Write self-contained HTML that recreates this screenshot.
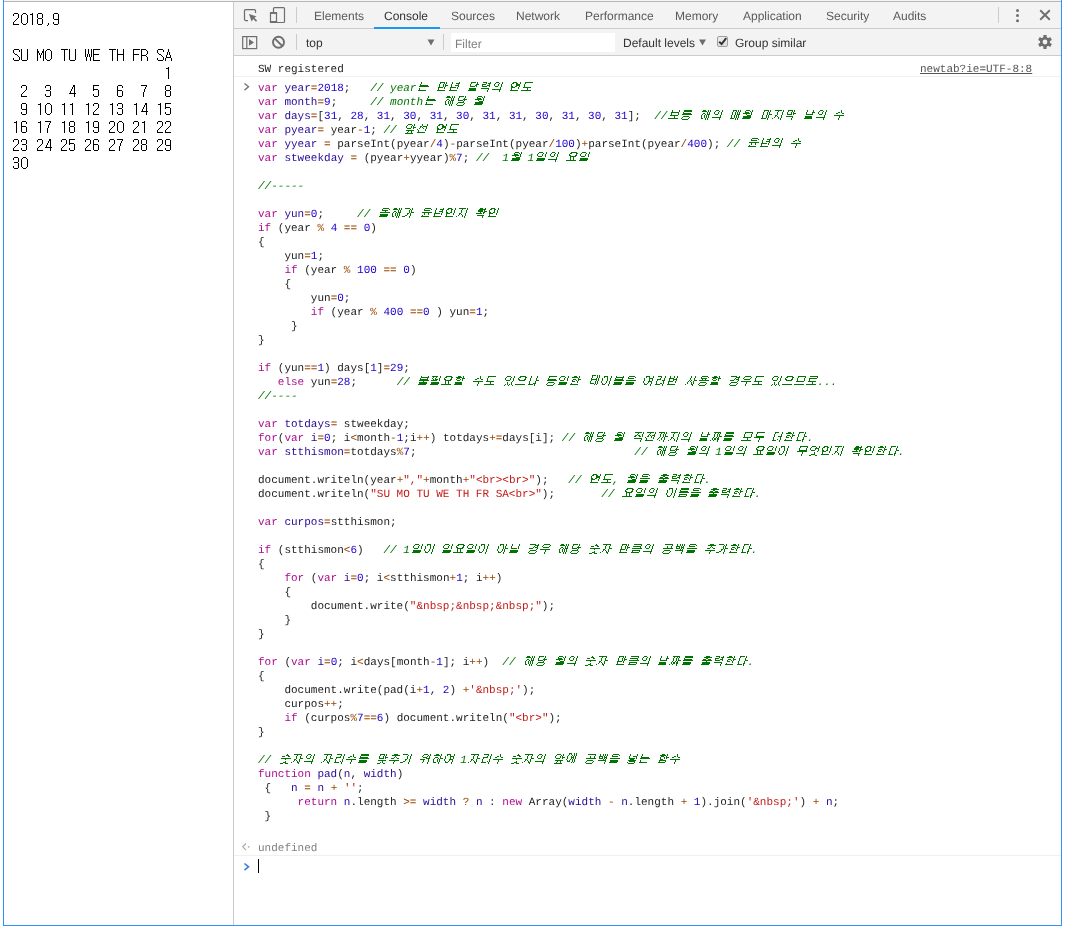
<!DOCTYPE html><html><head><meta charset="utf-8"><style>
*{margin:0;padding:0;box-sizing:border-box}
html,body{width:1066px;height:929px;overflow:hidden;background:#fff;text-rendering:geometricPrecision}
body{position:relative;font-family:"Liberation Sans",sans-serif}
#root{position:absolute;left:0;top:0;width:1066px;height:929px;will-change:transform}
.abs{position:absolute}
.cal{position:absolute;left:12px;top:12px;font-family:"Liberation Mono",monospace;font-size:18px;line-height:18px;color:transparent;white-space:pre;transform-origin:0 0;transform:scaleX(0.7407)}
.dt{position:absolute;left:233px;top:2px;width:828px;height:923px;border-left:1px solid #cbcbcb;background:#fff}
.tb{position:absolute;left:0;width:827px;height:27px;background:#f3f3f3;border-bottom:1px solid #cbcbcb}
.lbl{position:absolute;font-size:12px;color:#5a5a5a;white-space:nowrap}
.sep{position:absolute;width:1px;background:#cbcbcb}
pre.code{position:absolute;left:25px;top:79px;font-family:"Liberation Mono",monospace;font-size:11px;line-height:14px;color:#222;white-space:pre}
.k{color:rgb(170,13,145)}
.d{color:rgb(40,10,150)}
.n{color:rgb(28,0,207)}
.s{color:rgb(196,26,22)}
.o{color:rgb(153,69,0)}
.c{color:rgb(0,116,0);font-style:italic}
i.h{display:inline-block;font-style:normal;overflow:hidden;white-space:nowrap;font-size:12px;line-height:10px;color:transparent;vertical-align:top;height:10px}
</style></head><body><div id="root">
<div class="abs" style="left:4px;top:0;width:1057px;height:1px;background:#f5f5f5"></div>
<div class="abs" style="left:4px;top:1px;width:1057px;height:1px;background:#b8b6b8"></div>
<div class="cal">2018,9

SU MO TU WE TH FR SA
                   1
 2  3  4  5  6  7  8
 9 10 11 12 13 14 15
16 17 18 19 20 21 22
23 24 25 26 27 28 29
30</div>
<svg class="abs" style="left:0;top:0" width="232" height="200" shape-rendering="crispEdges"><defs><path id="c0" d="M2 0h4v1h-4zM1 1h1v1h-1zM6 1h1v1h-1zM1 2h1v1h-1zM6 2h1v1h-1zM6 3h1v1h-1zM6 4h1v1h-1zM5 5h1v1h-1zM4 6h1v1h-1zM3 7h1v1h-1zM2 8h1v1h-1zM1 9h1v1h-1zM1 10h1v1h-1zM1 11h6v1h-6z"/><path id="c1" d="M3 0h3v1h-3zM2 1h1v1h-1zM6 1h1v1h-1zM1 2h1v1h-1zM7 2h1v1h-1zM1 3h1v1h-1zM7 3h1v1h-1zM1 4h1v1h-1zM7 4h1v1h-1zM1 5h1v1h-1zM7 5h1v1h-1zM1 6h1v1h-1zM7 6h1v1h-1zM1 7h1v1h-1zM7 7h1v1h-1zM1 8h1v1h-1zM7 8h1v1h-1zM1 9h1v1h-1zM7 9h1v1h-1zM2 10h1v1h-1zM6 10h1v1h-1zM3 11h3v1h-3z"/><path id="c2" d="M4 0h1v1h-1zM2 1h3v1h-3zM4 2h1v1h-1zM4 3h1v1h-1zM4 4h1v1h-1zM4 5h1v1h-1zM4 6h1v1h-1zM4 7h1v1h-1zM4 8h1v1h-1zM4 9h1v1h-1zM4 10h1v1h-1zM4 11h1v1h-1z"/><path id="c3" d="M2 0h4v1h-4zM1 1h1v1h-1zM6 1h1v1h-1zM1 2h1v1h-1zM6 2h1v1h-1zM1 3h1v1h-1zM6 3h1v1h-1zM1 4h1v1h-1zM6 4h1v1h-1zM2 5h4v1h-4zM1 6h1v1h-1zM6 6h1v1h-1zM1 7h1v1h-1zM6 7h1v1h-1zM1 8h1v1h-1zM6 8h1v1h-1zM1 9h1v1h-1zM6 9h1v1h-1zM1 10h1v1h-1zM6 10h1v1h-1zM2 11h4v1h-4z"/><path id="c4" d="M4 10h1v1h-1zM4 11h1v1h-1zM3 12h1v1h-1z"/><path id="c5" d="M2 0h4v1h-4zM1 1h1v1h-1zM6 1h1v1h-1zM1 2h1v1h-1zM6 2h1v1h-1zM1 3h1v1h-1zM6 3h1v1h-1zM1 4h1v1h-1zM6 4h1v1h-1zM1 5h1v1h-1zM6 5h1v1h-1zM2 6h5v1h-5zM6 7h1v1h-1zM6 8h1v1h-1zM1 9h1v1h-1zM6 9h1v1h-1zM1 10h1v1h-1zM6 10h1v1h-1zM2 11h4v1h-4z"/><path id="c6" d="M2 0h5v1h-5zM1 1h1v1h-1zM7 1h1v1h-1zM1 2h1v1h-1zM7 2h1v1h-1zM1 3h1v1h-1zM2 4h1v1h-1zM3 5h2v1h-2zM5 6h1v1h-1zM6 7h1v1h-1zM7 8h1v1h-1zM1 9h1v1h-1zM7 9h1v1h-1zM1 10h1v1h-1zM7 10h1v1h-1zM2 11h5v1h-5z"/><path id="c7" d="M1 0h1v1h-1zM7 0h1v1h-1zM1 1h1v1h-1zM7 1h1v1h-1zM1 2h1v1h-1zM7 2h1v1h-1zM1 3h1v1h-1zM7 3h1v1h-1zM1 4h1v1h-1zM7 4h1v1h-1zM1 5h1v1h-1zM7 5h1v1h-1zM1 6h1v1h-1zM7 6h1v1h-1zM1 7h1v1h-1zM7 7h1v1h-1zM1 8h1v1h-1zM7 8h1v1h-1zM1 9h1v1h-1zM7 9h1v1h-1zM1 10h1v1h-1zM7 10h1v1h-1zM2 11h5v1h-5z"/><path id="c8" d="M1 0h1v1h-1zM7 0h1v1h-1zM1 1h1v1h-1zM7 1h1v1h-1zM1 2h2v1h-2zM6 2h2v1h-2zM1 3h2v1h-2zM6 3h2v1h-2zM1 4h1v1h-1zM3 4h1v1h-1zM5 4h1v1h-1zM7 4h1v1h-1zM1 5h1v1h-1zM3 5h1v1h-1zM5 5h1v1h-1zM7 5h1v1h-1zM1 6h1v1h-1zM4 6h1v1h-1zM7 6h1v1h-1zM1 7h1v1h-1zM4 7h1v1h-1zM7 7h1v1h-1zM1 8h1v1h-1zM4 8h1v1h-1zM7 8h1v1h-1zM1 9h1v1h-1zM7 9h1v1h-1zM1 10h1v1h-1zM7 10h1v1h-1zM1 11h1v1h-1zM7 11h1v1h-1z"/><path id="c9" d="M3 0h3v1h-3zM2 1h1v1h-1zM6 1h1v1h-1zM1 2h1v1h-1zM7 2h1v1h-1zM1 3h1v1h-1zM7 3h1v1h-1zM1 4h1v1h-1zM7 4h1v1h-1zM1 5h1v1h-1zM7 5h1v1h-1zM1 6h1v1h-1zM7 6h1v1h-1zM1 7h1v1h-1zM7 7h1v1h-1zM1 8h1v1h-1zM7 8h1v1h-1zM1 9h1v1h-1zM7 9h1v1h-1zM2 10h1v1h-1zM6 10h1v1h-1zM3 11h3v1h-3z"/><path id="c10" d="M1 0h7v1h-7zM4 1h1v1h-1zM4 2h1v1h-1zM4 3h1v1h-1zM4 4h1v1h-1zM4 5h1v1h-1zM4 6h1v1h-1zM4 7h1v1h-1zM4 8h1v1h-1zM4 9h1v1h-1zM4 10h1v1h-1zM4 11h1v1h-1z"/><path id="c11" d="M1 0h1v1h-1zM4 0h1v1h-1zM7 0h1v1h-1zM1 1h1v1h-1zM4 1h1v1h-1zM7 1h1v1h-1zM1 2h1v1h-1zM4 2h1v1h-1zM7 2h1v1h-1zM1 3h1v1h-1zM4 3h1v1h-1zM7 3h1v1h-1zM1 4h1v1h-1zM4 4h1v1h-1zM7 4h1v1h-1zM1 5h1v1h-1zM3 5h1v1h-1zM5 5h1v1h-1zM7 5h1v1h-1zM1 6h1v1h-1zM3 6h1v1h-1zM5 6h1v1h-1zM7 6h1v1h-1zM1 7h1v1h-1zM3 7h1v1h-1zM5 7h1v1h-1zM7 7h1v1h-1zM2 8h1v1h-1zM6 8h1v1h-1zM2 9h1v1h-1zM6 9h1v1h-1zM2 10h1v1h-1zM6 10h1v1h-1zM2 11h1v1h-1zM6 11h1v1h-1z"/><path id="c12" d="M1 0h7v1h-7zM1 1h1v1h-1zM1 2h1v1h-1zM1 3h1v1h-1zM1 4h1v1h-1zM1 5h6v1h-6zM1 6h1v1h-1zM1 7h1v1h-1zM1 8h1v1h-1zM1 9h1v1h-1zM1 10h1v1h-1zM1 11h7v1h-7z"/><path id="c13" d="M1 0h1v1h-1zM7 0h1v1h-1zM1 1h1v1h-1zM7 1h1v1h-1zM1 2h1v1h-1zM7 2h1v1h-1zM1 3h1v1h-1zM7 3h1v1h-1zM1 4h1v1h-1zM7 4h1v1h-1zM1 5h7v1h-7zM1 6h1v1h-1zM7 6h1v1h-1zM1 7h1v1h-1zM7 7h1v1h-1zM1 8h1v1h-1zM7 8h1v1h-1zM1 9h1v1h-1zM7 9h1v1h-1zM1 10h1v1h-1zM7 10h1v1h-1zM1 11h1v1h-1zM7 11h1v1h-1z"/><path id="c14" d="M1 0h7v1h-7zM1 1h1v1h-1zM1 2h1v1h-1zM1 3h1v1h-1zM1 4h1v1h-1zM1 5h6v1h-6zM1 6h1v1h-1zM1 7h1v1h-1zM1 8h1v1h-1zM1 9h1v1h-1zM1 10h1v1h-1zM1 11h1v1h-1z"/><path id="c15" d="M1 0h5v1h-5zM1 1h1v1h-1zM6 1h1v1h-1zM1 2h1v1h-1zM7 2h1v1h-1zM1 3h1v1h-1zM7 3h1v1h-1zM1 4h1v1h-1zM7 4h1v1h-1zM1 5h1v1h-1zM6 5h1v1h-1zM1 6h5v1h-5zM1 7h1v1h-1zM6 7h1v1h-1zM1 8h1v1h-1zM7 8h1v1h-1zM1 9h1v1h-1zM7 9h1v1h-1zM1 10h1v1h-1zM7 10h1v1h-1zM1 11h1v1h-1zM7 11h1v1h-1z"/><path id="c16" d="M4 0h1v1h-1zM4 1h1v1h-1zM4 2h1v1h-1zM3 3h1v1h-1zM5 3h1v1h-1zM3 4h1v1h-1zM5 4h1v1h-1zM3 5h1v1h-1zM5 5h1v1h-1zM2 6h1v1h-1zM6 6h1v1h-1zM2 7h1v1h-1zM6 7h1v1h-1zM2 8h5v1h-5zM1 9h1v1h-1zM7 9h1v1h-1zM1 10h1v1h-1zM7 10h1v1h-1zM1 11h1v1h-1zM7 11h1v1h-1z"/><path id="c17" d="M2 0h4v1h-4zM1 1h1v1h-1zM6 1h1v1h-1zM1 2h1v1h-1zM6 2h1v1h-1zM6 3h1v1h-1zM6 4h1v1h-1zM2 5h4v1h-4zM6 6h1v1h-1zM6 7h1v1h-1zM6 8h1v1h-1zM1 9h1v1h-1zM6 9h1v1h-1zM1 10h1v1h-1zM6 10h1v1h-1zM2 11h4v1h-4z"/><path id="c18" d="M5 0h2v1h-2zM5 1h2v1h-2zM4 2h1v1h-1zM6 2h1v1h-1zM4 3h1v1h-1zM6 3h1v1h-1zM3 4h1v1h-1zM6 4h1v1h-1zM3 5h1v1h-1zM6 5h1v1h-1zM2 6h1v1h-1zM6 6h1v1h-1zM2 7h1v1h-1zM6 7h1v1h-1zM1 8h7v1h-7zM6 9h1v1h-1zM6 10h1v1h-1zM6 11h1v1h-1z"/><path id="c19" d="M1 0h6v1h-6zM1 1h1v1h-1zM1 2h1v1h-1zM1 3h1v1h-1zM1 4h5v1h-5zM1 5h1v1h-1zM6 5h1v1h-1zM6 6h1v1h-1zM6 7h1v1h-1zM6 8h1v1h-1zM1 9h1v1h-1zM6 9h1v1h-1zM1 10h1v1h-1zM6 10h1v1h-1zM2 11h4v1h-4z"/><path id="c20" d="M2 0h4v1h-4zM1 1h1v1h-1zM6 1h1v1h-1zM1 2h1v1h-1zM6 2h1v1h-1zM1 3h1v1h-1zM1 4h1v1h-1zM1 5h5v1h-5zM1 6h1v1h-1zM6 6h1v1h-1zM1 7h1v1h-1zM6 7h1v1h-1zM1 8h1v1h-1zM6 8h1v1h-1zM1 9h1v1h-1zM6 9h1v1h-1zM1 10h1v1h-1zM6 10h1v1h-1zM2 11h4v1h-4z"/><path id="c21" d="M1 0h6v1h-6zM6 1h1v1h-1zM5 2h1v1h-1zM5 3h1v1h-1zM4 4h1v1h-1zM4 5h1v1h-1zM4 6h1v1h-1zM3 7h1v1h-1zM3 8h1v1h-1zM3 9h1v1h-1zM3 10h1v1h-1zM3 11h1v1h-1z"/></defs><g fill="#000"><use href="#c0" x="12" y="13"/><use href="#c1" x="20" y="13"/><use href="#c2" x="28" y="13"/><use href="#c3" x="36" y="13"/><use href="#c4" x="44" y="13"/><use href="#c5" x="52" y="13"/><use href="#c6" x="12" y="49"/><use href="#c7" x="20" y="49"/><use href="#c8" x="36" y="49"/><use href="#c9" x="44" y="49"/><use href="#c10" x="60" y="49"/><use href="#c7" x="68" y="49"/><use href="#c11" x="84" y="49"/><use href="#c12" x="92" y="49"/><use href="#c10" x="108" y="49"/><use href="#c13" x="116" y="49"/><use href="#c14" x="132" y="49"/><use href="#c15" x="140" y="49"/><use href="#c6" x="156" y="49"/><use href="#c16" x="164" y="49"/><use href="#c2" x="164" y="67"/><use href="#c0" x="20" y="85"/><use href="#c17" x="44" y="85"/><use href="#c18" x="68" y="85"/><use href="#c19" x="92" y="85"/><use href="#c20" x="116" y="85"/><use href="#c21" x="140" y="85"/><use href="#c3" x="164" y="85"/><use href="#c5" x="20" y="103"/><use href="#c2" x="36" y="103"/><use href="#c1" x="44" y="103"/><use href="#c2" x="60" y="103"/><use href="#c2" x="68" y="103"/><use href="#c2" x="84" y="103"/><use href="#c0" x="92" y="103"/><use href="#c2" x="108" y="103"/><use href="#c17" x="116" y="103"/><use href="#c2" x="132" y="103"/><use href="#c18" x="140" y="103"/><use href="#c2" x="156" y="103"/><use href="#c19" x="164" y="103"/><use href="#c2" x="12" y="121"/><use href="#c20" x="20" y="121"/><use href="#c2" x="36" y="121"/><use href="#c21" x="44" y="121"/><use href="#c2" x="60" y="121"/><use href="#c3" x="68" y="121"/><use href="#c2" x="84" y="121"/><use href="#c5" x="92" y="121"/><use href="#c0" x="108" y="121"/><use href="#c1" x="116" y="121"/><use href="#c0" x="132" y="121"/><use href="#c2" x="140" y="121"/><use href="#c0" x="156" y="121"/><use href="#c0" x="164" y="121"/><use href="#c0" x="12" y="139"/><use href="#c17" x="20" y="139"/><use href="#c0" x="36" y="139"/><use href="#c18" x="44" y="139"/><use href="#c0" x="60" y="139"/><use href="#c19" x="68" y="139"/><use href="#c0" x="84" y="139"/><use href="#c20" x="92" y="139"/><use href="#c0" x="108" y="139"/><use href="#c21" x="116" y="139"/><use href="#c0" x="132" y="139"/><use href="#c3" x="140" y="139"/><use href="#c0" x="156" y="139"/><use href="#c5" x="164" y="139"/><use href="#c17" x="12" y="157"/><use href="#c1" x="20" y="157"/></g></svg>
<div class="dt">
<div class="tb" style="top:0;height:27px"></div>
<div class="tb" style="top:27px;height:27px"></div>
<div class="lbl" style="left:80px;top:7px;color:#5a5a5a">Elements</div>
<div class="lbl" style="left:150px;top:7px;color:#333">Console</div>
<div class="lbl" style="left:217px;top:7px;color:#5a5a5a">Sources</div>
<div class="lbl" style="left:282px;top:7px;color:#5a5a5a">Network</div>
<div class="lbl" style="left:351px;top:7px;color:#5a5a5a">Performance</div>
<div class="lbl" style="left:441px;top:7px;color:#5a5a5a">Memory</div>
<div class="lbl" style="left:509px;top:7px;color:#5a5a5a">Application</div>
<div class="lbl" style="left:592px;top:7px;color:#5a5a5a">Security</div>
<div class="lbl" style="left:659px;top:7px;color:#5a5a5a">Audits</div>
<div class="abs" style="left:140px;top:25px;width:66px;height:2px;background:#1a97f0"></div>
<div class="sep" style="left:62px;top:5px;height:16px"></div>
<div class="sep" style="left:764px;top:5px;height:16px"></div>
<div class="sep" style="left:62px;top:32px;height:16px"></div>
<div class="sep" style="left:209px;top:32px;height:16px"></div>
<svg class="abs" style="left:9px;top:5px" width="16" height="16" viewBox="0 0 16 16"><path d="M5 13.5H2.7a1.2 1.2 0 0 1-1.2-1.2V3.7a1.2 1.2 0 0 1 1.2-1.2H11.3a1.2 1.2 0 0 1 1.2 1.2V6" fill="none" stroke="#6e6e6e" stroke-width="1.25"/><path d="M6 7L13.6 9.5 11.3 10.8 14.1 13.6 13 14.7 10.2 11.9 8.6 14.6z" fill="#6e6e6e"/></svg>
<svg class="abs" style="left:35px;top:5px" width="18" height="18" viewBox="0 0 18 18"><rect x="4.5" y="0.6" width="11" height="14.9" rx="1" fill="none" stroke="#6e6e6e" stroke-width="1.2"/><rect x="1.5" y="5.8" width="6" height="9.7" rx="0.5" fill="#f3f3f3" stroke="#6e6e6e" stroke-width="1.2"/><rect x="0.9" y="5.2" width="7.2" height="1.7" fill="#6e6e6e"/><rect x="0.9" y="14" width="7.2" height="2" fill="#6e6e6e"/></svg>
<svg class="abs" style="left:780px;top:5px" width="8" height="16" viewBox="0 0 8 16"><circle cx="3.5" cy="3.5" r="1.5" fill="#6e6e6e"/><circle cx="3.5" cy="8.5" r="1.5" fill="#6e6e6e"/><circle cx="3.5" cy="13.7" r="1.5" fill="#6e6e6e"/></svg>
<svg class="abs" style="left:805px;top:7px" width="12" height="12" viewBox="0 0 12 12"><path d="M1.2 1.3L10.8 10.7M10.8 1.3L1.2 10.7" stroke="#6e6e6e" stroke-width="1.9"/></svg>
<svg class="abs" style="left:8px;top:34px" width="16" height="14" viewBox="0 0 16 14"><rect x="0.7" y="0.6" width="14" height="12" fill="none" stroke="#6e6e6e" stroke-width="1.2"/><path d="M4.8 0.6V12.6" stroke="#6e6e6e" stroke-width="1.2"/><path d="M7 3.1L12 6.45 7 9.8z" fill="#6e6e6e"/></svg>
<svg class="abs" style="left:37px;top:33px" width="16" height="16" viewBox="0 0 16 16"><circle cx="7.5" cy="7.3" r="5.5" fill="none" stroke="#6e6e6e" stroke-width="1.9"/><path d="M3.6 3.4L11.4 11.2" stroke="#6e6e6e" stroke-width="1.9"/></svg>
<div class="lbl" style="left:72px;top:34px;color:#333">top</div>
<svg class="abs" style="left:193px;top:37px" width="8" height="7" viewBox="0 0 8 7"><path d="M0.5 0.5h7L4 6.5z" fill="#6e6e6e"/></svg>
<div class="abs" style="left:217px;top:31px;width:164px;height:19px;background:#fff"></div>
<div class="lbl" style="left:221px;top:35px;color:#808080">Filter</div>
<div class="lbl" style="left:389px;top:34px;color:#333">Default levels</div>
<svg class="abs" style="left:465px;top:37px" width="8" height="7" viewBox="0 0 8 7"><path d="M0 0.5h7L3.5 6.5z" fill="#6e6e6e"/></svg>
<div class="abs" style="left:483px;top:34px;width:11px;height:11px;border:1px solid #a0a0a0;border-radius:2px;background:linear-gradient(#ececec,#e0e0e0)"></div>
<svg class="abs" style="left:483px;top:34px" width="11" height="11" viewBox="0 0 11 11"><path d="M2.2 5.8L4.6 8.1 9.2 2.2" fill="none" stroke="#333" stroke-width="2"/></svg>
<div class="lbl" style="left:501px;top:34px;color:#333">Group similar</div>
<svg class="abs" style="left:803px;top:32px" width="16" height="16" viewBox="-8 -8 16 16"><g fill="#6e6e6e"><circle r="5"/><rect x="-1.6" y="-7" width="3.2" height="3" transform="rotate(0)"/><rect x="-1.6" y="-7" width="3.2" height="3" transform="rotate(60)"/><rect x="-1.6" y="-7" width="3.2" height="3" transform="rotate(120)"/><rect x="-1.6" y="-7" width="3.2" height="3" transform="rotate(180)"/><rect x="-1.6" y="-7" width="3.2" height="3" transform="rotate(240)"/><rect x="-1.6" y="-7" width="3.2" height="3" transform="rotate(300)"/></g><circle r="2.4" fill="#f3f3f3"/></svg>
<div class="abs" style="left:24px;top:61px;font-family:'Liberation Mono',monospace;font-size:11px;line-height:14px;color:#222;white-space:pre">SW registered</div>
<div class="abs" style="left:686px;top:61px;font-family:'Liberation Mono',monospace;font-size:11px;line-height:14px;color:#555;white-space:pre;text-decoration:underline">newtab?ie=UTF-8:8</div>
<div class="abs" style="left:0;top:74px;width:827px;height:1px;background:#f0f0f0"></div>
<svg class="abs" style="left:9px;top:80px" width="8" height="10" viewBox="0 0 8 10"><path d="M1.5 1.5L5.5 4.8 1.5 8.1" fill="none" stroke="#777" stroke-width="1.4"/></svg>
<pre class="code" style="left:24px;top:80px"><span class="k">var</span> <span class="d">year</span><span class="o">=</span><span class="n">2018</span>;   <span class="c">// year<i class="h" style="width:12px">는</i> <i class="h" style="width:24px">만년</i> <i class="h" style="width:36px">달력의</i> <i class="h" style="width:24px">연도</i></span>
<span class="k">var</span> <span class="d">month</span><span class="o">=</span><span class="n">9</span>;     <span class="c">// month<i class="h" style="width:12px">는</i> <i class="h" style="width:24px">해당</i> <i class="h" style="width:12px">월</i></span>
<span class="k">var</span> <span class="d">days</span><span class="o">=</span>[<span class="n">31</span>, <span class="n">28</span>, <span class="n">31</span>, <span class="n">30</span>, <span class="n">31</span>, <span class="n">30</span>, <span class="n">31</span>, <span class="n">31</span>, <span class="n">30</span>, <span class="n">31</span>, <span class="n">30</span>, <span class="n">31</span>];  <span class="c">//<i class="h" style="width:24px">보통</i> <i class="h" style="width:24px">해의</i> <i class="h" style="width:24px">매월</i> <i class="h" style="width:36px">마지막</i> <i class="h" style="width:24px">날의</i> <i class="h" style="width:12px">수</i></span>
<span class="k">var</span> <span class="d">pyear</span><span class="o">=</span> year<span class="o">-</span><span class="n">1</span>; <span class="c">// <i class="h" style="width:24px">앞선</i> <i class="h" style="width:24px">연도</i></span>
<span class="k">var</span> <span class="d">yyear</span> <span class="o">=</span> parseInt(pyear<span class="o">/</span><span class="n">4</span>)<span class="o">-</span>parseInt(pyear<span class="o">/</span><span class="n">100</span>)<span class="o">+</span>parseInt(pyear<span class="o">/</span><span class="n">400</span>); <span class="c">// <i class="h" style="width:36px">윤년의</i> <i class="h" style="width:12px">수</i></span>
<span class="k">var</span> <span class="d">stweekday</span> <span class="o">=</span> (pyear<span class="o">+</span>yyear)<span class="o">%</span><span class="n">7</span>; <span class="c">//  1<i class="h" style="width:12px">월</i> 1<i class="h" style="width:24px">일의</i> <i class="h" style="width:24px">요일</i></span>

<span class="c">//-----</span>

<span class="k">var</span> <span class="d">yun</span><span class="o">=</span><span class="n">0</span>;     <span class="c">// <i class="h" style="width:36px">올해가</i> <i class="h" style="width:48px">윤년인지</i> <i class="h" style="width:24px">확인</i></span>
<span class="k">if</span> (year <span class="o">%</span> <span class="n">4</span> <span class="o">==</span> <span class="n">0</span>)
{
    yun<span class="o">=</span><span class="n">1</span>;
    <span class="k">if</span> (year <span class="o">%</span> <span class="n">100</span> <span class="o">==</span> <span class="n">0</span>)
    {
        yun<span class="o">=</span><span class="n">0</span>;
        <span class="k">if</span> (year <span class="o">%</span> <span class="n">400</span> <span class="o">==</span><span class="n">0</span> ) yun<span class="o">=</span><span class="n">1</span>;
     }
}

<span class="k">if</span> (yun<span class="o">==</span><span class="n">1</span>) days[<span class="n">1</span>]<span class="o">=</span><span class="n">29</span>;
   <span class="k">else</span> yun<span class="o">=</span><span class="n">28</span>;      <span class="c">// <i class="h" style="width:48px">불필요할</i> <i class="h" style="width:24px">수도</i> <i class="h" style="width:36px">있으나</i> <i class="h" style="width:36px">동일한</i> <i class="h" style="width:48px">테이블을</i> <i class="h" style="width:36px">여러번</i> <i class="h" style="width:36px">사용할</i> <i class="h" style="width:36px">경우도</i> <i class="h" style="width:48px">있으므로</i>...</span>
<span class="c">//----</span>

<span class="k">var</span> <span class="d">totdays</span><span class="o">=</span> stweekday;
<span class="k">for</span>(<span class="k">var</span> <span class="d">i</span><span class="o">=</span><span class="n">0</span>; i<span class="o">&lt;</span>month<span class="o">-</span><span class="n">1</span>;i<span class="o">++</span>) totdays<span class="o">+=</span>days[i]; <span class="c">// <i class="h" style="width:24px">해당</i> <i class="h" style="width:12px">월</i> <i class="h" style="width:60px">직전까지의</i> <i class="h" style="width:36px">날짜를</i> <i class="h" style="width:24px">모두</i> <i class="h" style="width:36px">더한다</i>.</span>
<span class="k">var</span> <span class="d">stthismon</span><span class="o">=</span>totdays<span class="o">%</span><span class="n">7</span>;                                 <span class="c">// <i class="h" style="width:24px">해당</i> <i class="h" style="width:24px">월의</i> 1<i class="h" style="width:24px">일의</i> <i class="h" style="width:36px">요일이</i> <i class="h" style="width:48px">무엇인지</i> <i class="h" style="width:48px">확인한다</i>.</span>

document.writeln(year<span class="o">+</span><span class="s">","</span><span class="o">+</span>month<span class="o">+</span><span class="s">"&lt;br&gt;&lt;br&gt;"</span>);   <span class="c">// <i class="h" style="width:24px">연도</i>, <i class="h" style="width:24px">월을</i> <i class="h" style="width:48px">출력한다</i>.</span>
document.writeln(<span class="s">"SU MO TU WE TH FR SA&lt;br&gt;"</span>);       <span class="c">// <i class="h" style="width:36px">요일의</i> <i class="h" style="width:36px">이름을</i> <i class="h" style="width:48px">출력한다</i>.</span>

<span class="k">var</span> <span class="d">curpos</span><span class="o">=</span>stthismon;

<span class="k">if</span> (stthismon<span class="o">&lt;</span><span class="n">6</span>)   <span class="c">// 1<i class="h" style="width:24px">일이</i> <i class="h" style="width:48px">일요일이</i> <i class="h" style="width:24px">아닐</i> <i class="h" style="width:24px">경우</i> <i class="h" style="width:24px">해당</i> <i class="h" style="width:24px">숫자</i> <i class="h" style="width:36px">만큼의</i> <i class="h" style="width:36px">공백을</i> <i class="h" style="width:48px">추가한다</i>.</span>
{
    <span class="k">for</span> (<span class="k">var</span> <span class="d">i</span><span class="o">=</span><span class="n">0</span>; i<span class="o">&lt;</span>stthismon<span class="o">+</span><span class="n">1</span>; i<span class="o">++</span>)
    {
        document.write(<span class="s">"&amp;nbsp;&amp;nbsp;&amp;nbsp;"</span>);
    }
}

<span class="k">for</span> (<span class="k">var</span> <span class="d">i</span><span class="o">=</span><span class="n">0</span>; i<span class="o">&lt;</span>days[month<span class="o">-</span><span class="n">1</span>]; i<span class="o">++</span>)  <span class="c">// <i class="h" style="width:24px">해당</i> <i class="h" style="width:24px">월의</i> <i class="h" style="width:24px">숫자</i> <i class="h" style="width:36px">만큼의</i> <i class="h" style="width:36px">날짜를</i> <i class="h" style="width:48px">출력한다</i>.</span>
{
    document.write(pad(i<span class="o">+</span><span class="n">1</span>, <span class="n">2</span>) <span class="o">+</span><span class="s">'&amp;nbsp;'</span>);
    curpos<span class="o">++</span>;
    <span class="k">if</span> (curpos<span class="o">%</span><span class="n">7</span><span class="o">==</span><span class="n">6</span>) document.writeln(<span class="s">"&lt;br&gt;"</span>);
}

<span class="c">// <i class="h" style="width:36px">숫자의</i> <i class="h" style="width:48px">자리수를</i> <i class="h" style="width:36px">맞추기</i> <i class="h" style="width:36px">위하여</i> 1<i class="h" style="width:36px">자리수</i> <i class="h" style="width:36px">숫자의</i> <i class="h" style="width:24px">앞에</i> <i class="h" style="width:36px">공백을</i> <i class="h" style="width:24px">넣는</i> <i class="h" style="width:24px">함수</i></span>
<span class="k">function</span> <span class="d">pad</span>(<span class="d">n</span>, <span class="d">width</span>)
 {   <span class="d">n</span> <span class="o">=</span> <span class="d">n</span> <span class="o">+</span> <span class="s">''</span>;
      <span class="k">return</span> <span class="d">n</span>.length <span class="o">&gt;=</span> <span class="d">width</span> <span class="o">?</span> <span class="d">n</span> : <span class="k">new</span> Array(<span class="d">width</span> <span class="o">-</span> <span class="d">n</span>.length <span class="o">+</span> <span class="n">1</span>).join(<span class="s">'&amp;nbsp;'</span>) <span class="o">+</span> <span class="d">n</span>;
 }</pre>
<svg class="abs" style="left:7px;top:840px" width="10" height="10" viewBox="0 0 10 10"><path d="M5 1.5L1.8 4.8 5 8.1" fill="none" stroke="#aaa" stroke-width="1.2"/><circle cx="7.6" cy="4.8" r="0.9" fill="#aaa"/></svg>
<div class="abs" style="left:24px;top:840px;font-family:'Liberation Mono',monospace;font-size:11px;line-height:14px;color:#808080;white-space:pre">undefined</div>
<div class="abs" style="left:0;top:853px;width:827px;height:1px;background:#f0f0f0"></div>
<svg class="abs" style="left:9px;top:860px" width="8" height="10" viewBox="0 0 8 10"><path d="M1.5 1.5L5.5 4.8 1.5 8.1" fill="none" stroke="#367cf1" stroke-width="1.6"/></svg>
<div class="abs" style="left:24px;top:857px;width:1px;height:14px;background:#000"></div>
</div>
<svg class="abs" style="left:0;top:0" width="1066" height="929" shape-rendering="crispEdges"><defs><path id="g0" d="M5 1h1v1h-1zM5 2h1v1h-1zM4 3h1v1h-1zM4 4h8v1h-8zM3 5h10v1h-10zM3 7h1v1h-1zM3 8h1v1h-1zM2 9h8v1h-8z"/><path id="g1" d="M5 1h5v1h-5zM11 1h1v1h-1zM5 2h1v1h-1zM9 2h1v1h-1zM11 2h1v1h-1zM4 3h1v1h-1zM8 3h1v1h-1zM10 3h1v1h-1zM4 4h1v1h-1zM8 4h1v1h-1zM10 4h3v1h-3zM4 5h1v1h-1zM8 5h1v1h-1zM10 5h1v1h-1zM3 6h5v1h-5zM9 6h1v1h-1zM3 7h1v1h-1zM9 7h1v1h-1zM3 8h1v1h-1zM2 9h8v1h-8z"/><path id="g2" d="M5 1h1v1h-1zM12 1h1v1h-1zM5 2h1v1h-1zM9 2h4v1h-4zM4 3h1v1h-1zM11 3h1v1h-1zM4 4h1v1h-1zM8 4h4v1h-4zM4 5h1v1h-1zM11 5h1v1h-1zM3 6h6v1h-6zM10 6h1v1h-1zM3 7h1v1h-1zM10 7h1v1h-1zM3 8h1v1h-1zM2 9h8v1h-8z"/><path id="g3" d="M5 1h5v1h-5zM11 1h1v1h-1zM5 2h1v1h-1zM11 2h1v1h-1zM4 3h1v1h-1zM10 3h3v1h-3zM4 4h1v1h-1zM9 4h2v1h-2zM4 5h5v1h-5zM10 5h1v1h-1zM3 7h7v1h-7zM3 8h7v1h-7zM2 9h8v1h-8z"/><path id="g4" d="M5 1h4v1h-4zM12 1h1v1h-1zM8 2h1v1h-1zM10 2h3v1h-3zM4 3h4v1h-4zM11 3h1v1h-1zM4 4h1v1h-1zM9 4h3v1h-3zM4 5h5v1h-5zM11 5h1v1h-1zM3 7h8v1h-8zM10 8h1v1h-1zM9 9h1v1h-1zM9 10h1v1h-1z"/><path id="g5" d="M6 1h3v1h-3zM12 1h1v1h-1zM5 2h1v1h-1zM9 2h1v1h-1zM12 2h1v1h-1zM4 3h1v1h-1zM8 3h1v1h-1zM11 3h1v1h-1zM4 4h1v1h-1zM8 4h1v1h-1zM11 4h1v1h-1zM5 5h3v1h-3zM11 5h1v1h-1zM10 6h1v1h-1zM10 7h1v1h-1zM2 8h9v1h-9zM9 9h1v1h-1zM9 10h1v1h-1z"/><path id="g6" d="M5 1h4v1h-4zM12 1h1v1h-1zM4 2h2v1h-2zM8 2h2v1h-2zM12 2h1v1h-1zM3 3h1v1h-1zM8 3h4v1h-4zM3 4h1v1h-1zM8 4h4v1h-4zM3 5h2v1h-2zM7 5h2v1h-2zM11 5h1v1h-1zM3 6h4v1h-4zM10 6h1v1h-1zM3 7h1v1h-1zM10 7h1v1h-1zM3 8h1v1h-1zM2 9h8v1h-8z"/><path id="g7" d="M5 1h8v1h-8zM5 2h1v1h-1zM4 3h1v1h-1zM4 4h1v1h-1zM4 5h1v1h-1zM3 6h8v1h-8zM7 7h1v1h-1zM7 8h1v1h-1zM1 9h10v1h-10z"/><path id="g8" d="M5 1h3v1h-3zM10 1h1v1h-1zM12 1h1v1h-1zM4 2h5v1h-5zM10 2h1v1h-1zM12 2h1v1h-1zM9 3h1v1h-1zM11 3h1v1h-1zM5 4h2v1h-2zM9 4h1v1h-1zM11 4h1v1h-1zM4 5h1v1h-1zM7 5h1v1h-1zM9 5h3v1h-3zM3 6h1v1h-1zM6 6h1v1h-1zM8 6h1v1h-1zM10 6h1v1h-1zM3 7h1v1h-1zM6 7h1v1h-1zM8 7h1v1h-1zM10 7h1v1h-1zM3 8h1v1h-1zM6 8h1v1h-1zM8 8h1v1h-1zM10 8h1v1h-1zM3 9h2v1h-2zM7 9h1v1h-1zM9 9h1v1h-1zM7 10h1v1h-1zM9 10h1v1h-1z"/><path id="g9" d="M5 1h5v1h-5zM11 1h1v1h-1zM5 2h1v1h-1zM11 2h1v1h-1zM4 3h1v1h-1zM10 3h1v1h-1zM4 4h1v1h-1zM9 4h4v1h-4zM4 5h5v1h-5zM10 5h1v1h-1zM9 6h1v1h-1zM4 7h6v1h-6zM3 8h1v1h-1zM10 8h1v1h-1zM2 9h1v1h-1zM9 9h1v1h-1zM3 10h6v1h-6z"/><path id="g10" d="M6 1h4v1h-4zM12 1h1v1h-1zM5 2h1v1h-1zM10 2h1v1h-1zM12 2h1v1h-1zM5 3h4v1h-4zM11 3h1v1h-1zM3 4h7v1h-7zM11 4h1v1h-1zM6 5h1v1h-1zM11 5h1v1h-1zM7 6h4v1h-4zM3 7h8v1h-8zM3 8h8v1h-8zM2 9h8v1h-8z"/><path id="g11" d="M5 1h1v1h-1zM12 1h1v1h-1zM5 2h1v1h-1zM12 2h1v1h-1zM4 3h8v1h-8zM4 4h1v1h-1zM11 4h1v1h-1zM4 5h1v1h-1zM11 5h1v1h-1zM3 6h8v1h-8zM7 7h1v1h-1zM7 8h1v1h-1zM1 9h10v1h-10z"/><path id="g12" d="M5 1h8v1h-8zM5 2h8v1h-8zM4 3h1v1h-1zM4 4h8v1h-8zM3 5h10v1h-10zM4 7h6v1h-6zM3 8h1v1h-1zM10 8h1v1h-1zM2 9h1v1h-1zM9 9h1v1h-1zM3 10h6v1h-6z"/><path id="g13" d="M5 1h4v1h-4zM10 1h1v1h-1zM12 1h1v1h-1zM5 2h1v1h-1zM8 2h1v1h-1zM10 2h1v1h-1zM12 2h1v1h-1zM4 3h1v1h-1zM7 3h1v1h-1zM9 3h1v1h-1zM11 3h1v1h-1zM4 4h1v1h-1zM7 4h1v1h-1zM9 4h1v1h-1zM11 4h1v1h-1zM4 5h1v1h-1zM7 5h1v1h-1zM9 5h3v1h-3zM3 6h1v1h-1zM6 6h1v1h-1zM8 6h1v1h-1zM10 6h1v1h-1zM3 7h1v1h-1zM6 7h1v1h-1zM8 7h1v1h-1zM10 7h1v1h-1zM3 8h1v1h-1zM6 8h1v1h-1zM8 8h1v1h-1zM10 8h1v1h-1zM2 9h4v1h-4zM7 9h1v1h-1zM9 9h1v1h-1zM7 10h1v1h-1zM9 10h1v1h-1z"/><path id="g14" d="M5 1h5v1h-5zM11 1h1v1h-1zM5 2h1v1h-1zM9 2h1v1h-1zM11 2h1v1h-1zM4 3h1v1h-1zM8 3h1v1h-1zM10 3h1v1h-1zM4 4h1v1h-1zM8 4h1v1h-1zM10 4h1v1h-1zM4 5h1v1h-1zM8 5h1v1h-1zM10 5h3v1h-3zM3 6h1v1h-1zM7 6h1v1h-1zM9 6h1v1h-1zM3 7h1v1h-1zM7 7h1v1h-1zM9 7h1v1h-1zM3 8h1v1h-1zM7 8h1v1h-1zM9 8h1v1h-1zM2 9h5v1h-5zM8 9h1v1h-1zM8 10h1v1h-1z"/><path id="g15" d="M4 1h7v1h-7zM12 1h1v1h-1zM7 2h1v1h-1zM12 2h1v1h-1zM6 3h1v1h-1zM11 3h1v1h-1zM6 4h1v1h-1zM11 4h1v1h-1zM6 5h1v1h-1zM11 5h1v1h-1zM4 6h2v1h-2zM10 6h1v1h-1zM4 7h1v1h-1zM6 7h1v1h-1zM10 7h1v1h-1zM3 8h1v1h-1zM7 8h1v1h-1zM10 8h1v1h-1zM1 9h1v1h-1zM7 9h1v1h-1zM9 9h1v1h-1zM9 10h1v1h-1z"/><path id="g16" d="M5 1h5v1h-5zM11 1h1v1h-1zM5 2h1v1h-1zM9 2h1v1h-1zM11 2h1v1h-1zM4 3h1v1h-1zM8 3h1v1h-1zM10 3h1v1h-1zM4 4h1v1h-1zM8 4h1v1h-1zM10 4h3v1h-3zM4 5h5v1h-5zM10 5h1v1h-1zM3 7h7v1h-7zM9 8h1v1h-1zM8 9h1v1h-1zM8 10h1v1h-1z"/><path id="g17" d="M5 1h1v1h-1zM11 1h1v1h-1zM5 2h1v1h-1zM11 2h1v1h-1zM4 3h1v1h-1zM10 3h3v1h-3zM4 4h1v1h-1zM10 4h1v1h-1zM4 5h7v1h-7zM3 7h7v1h-7zM3 8h7v1h-7zM2 9h8v1h-8z"/><path id="g18" d="M9 1h1v1h-1zM9 2h1v1h-1zM6 3h2v1h-2zM9 3h1v1h-1zM4 4h2v1h-2zM10 4h2v1h-2zM2 6h10v1h-10zM7 7h1v1h-1zM7 8h1v1h-1zM6 9h1v1h-1zM6 10h1v1h-1z"/><path id="g19" d="M5 1h4v1h-4zM11 1h1v1h-1zM4 2h1v1h-1zM9 2h1v1h-1zM11 2h1v1h-1zM3 3h1v1h-1zM8 3h1v1h-1zM10 3h1v1h-1zM3 4h1v1h-1zM8 4h1v1h-1zM10 4h3v1h-3zM4 5h4v1h-4zM10 5h1v1h-1zM3 7h8v1h-8zM5 8h1v1h-1zM8 8h1v1h-1zM4 9h1v1h-1zM8 9h1v1h-1zM2 10h8v1h-8z"/><path id="g20" d="M7 1h1v1h-1zM12 1h1v1h-1zM7 2h1v1h-1zM12 2h1v1h-1zM5 3h2v1h-2zM8 3h4v1h-4zM5 4h1v1h-1zM7 4h1v1h-1zM11 4h1v1h-1zM4 5h1v1h-1zM8 5h1v1h-1zM11 5h1v1h-1zM2 6h1v1h-1zM10 6h1v1h-1zM3 7h1v1h-1zM10 7h1v1h-1zM3 8h1v1h-1zM2 9h8v1h-8z"/><path id="g21" d="M6 1h6v1h-6zM5 2h1v1h-1zM12 2h1v1h-1zM5 3h6v1h-6zM3 5h10v1h-10zM5 6h1v1h-1zM9 6h1v1h-1zM5 7h1v1h-1zM9 7h1v1h-1zM3 8h1v1h-1zM2 9h8v1h-8z"/><path id="g22" d="M5 1h4v1h-4zM12 1h1v1h-1zM4 2h1v1h-1zM9 2h1v1h-1zM12 2h1v1h-1zM3 3h1v1h-1zM8 3h1v1h-1zM11 3h1v1h-1zM3 4h1v1h-1zM8 4h1v1h-1zM11 4h1v1h-1zM4 5h4v1h-4zM11 5h1v1h-1zM3 7h8v1h-8zM3 8h8v1h-8zM2 9h8v1h-8z"/><path id="g23" d="M6 1h6v1h-6zM5 2h2v1h-2zM11 2h2v1h-2zM4 3h1v1h-1zM11 3h1v1h-1zM4 4h2v1h-2zM10 4h2v1h-2zM5 5h6v1h-6zM5 6h1v1h-1zM8 6h1v1h-1zM5 7h1v1h-1zM8 7h1v1h-1zM5 8h1v1h-1zM8 8h1v1h-1zM1 9h10v1h-10z"/><path id="g24" d="M6 1h6v1h-6zM5 2h1v1h-1zM12 2h1v1h-1zM5 3h6v1h-6zM8 4h1v1h-1zM3 5h10v1h-10zM3 7h8v1h-8zM3 8h8v1h-8zM2 9h8v1h-8z"/><path id="g25" d="M4 1h5v1h-5zM11 1h1v1h-1zM9 2h1v1h-1zM11 2h1v1h-1zM8 3h1v1h-1zM10 3h1v1h-1zM8 4h1v1h-1zM10 4h1v1h-1zM8 5h1v1h-1zM10 5h3v1h-3zM6 6h2v1h-2zM9 6h1v1h-1zM6 7h1v1h-1zM9 7h1v1h-1zM4 8h2v1h-2zM9 8h1v1h-1zM1 9h3v1h-3zM8 9h1v1h-1zM8 10h1v1h-1z"/><path id="g26" d="M5 1h4v1h-4zM12 1h1v1h-1zM4 2h2v1h-2zM8 2h2v1h-2zM12 2h1v1h-1zM3 3h1v1h-1zM8 3h1v1h-1zM11 3h1v1h-1zM3 4h1v1h-1zM8 4h1v1h-1zM11 4h1v1h-1zM3 5h2v1h-2zM7 5h2v1h-2zM11 5h1v1h-1zM3 6h4v1h-4zM10 6h1v1h-1zM3 7h1v1h-1zM10 7h1v1h-1zM3 8h1v1h-1zM2 9h8v1h-8z"/><path id="g27" d="M6 1h3v1h-3zM11 1h1v1h-1zM5 2h7v1h-7zM4 3h5v1h-5zM10 3h1v1h-1zM4 4h5v1h-5zM10 4h3v1h-3zM6 5h1v1h-1zM9 5h2v1h-2zM2 6h6v1h-6zM9 6h1v1h-1zM3 8h7v1h-7zM8 9h1v1h-1zM8 10h1v1h-1z"/><path id="g28" d="M5 1h1v1h-1zM12 1h1v1h-1zM5 2h8v1h-8zM4 3h1v1h-1zM11 3h1v1h-1zM4 4h8v1h-8zM3 5h10v1h-10zM7 6h1v1h-1zM3 7h8v1h-8zM3 8h8v1h-8zM2 9h8v1h-8z"/><path id="g29" d="M4 1h6v1h-6zM12 1h1v1h-1zM5 2h1v1h-1zM8 2h1v1h-1zM12 2h1v1h-1zM4 3h1v1h-1zM7 3h1v1h-1zM11 3h1v1h-1zM5 4h1v1h-1zM7 4h3v1h-3zM11 4h1v1h-1zM3 5h6v1h-6zM11 5h1v1h-1zM3 7h8v1h-8zM3 8h8v1h-8zM2 9h8v1h-8z"/><path id="g30" d="M6 1h3v1h-3zM11 1h1v1h-1zM4 2h6v1h-6zM11 2h1v1h-1zM5 3h3v1h-3zM10 3h3v1h-3zM4 4h1v1h-1zM8 4h1v1h-1zM10 4h1v1h-1zM5 5h3v1h-3zM10 5h1v1h-1zM3 7h7v1h-7zM3 8h7v1h-7zM2 9h8v1h-8z"/><path id="g31" d="M5 1h4v1h-4zM12 1h1v1h-1zM4 2h1v1h-1zM9 2h1v1h-1zM12 2h1v1h-1zM3 3h1v1h-1zM8 3h1v1h-1zM11 3h1v1h-1zM3 4h1v1h-1zM8 4h1v1h-1zM11 4h1v1h-1zM4 5h4v1h-4zM11 5h1v1h-1zM10 6h1v1h-1zM5 7h1v1h-1zM9 7h1v1h-1zM5 8h1v1h-1zM9 8h1v1h-1zM3 9h1v1h-1zM5 9h1v1h-1zM7 9h1v1h-1zM9 9h1v1h-1zM2 10h1v1h-1zM6 10h1v1h-1zM10 10h1v1h-1z"/><path id="g32" d="M6 1h6v1h-6zM5 2h2v1h-2zM11 2h2v1h-2zM4 3h1v1h-1zM11 3h1v1h-1zM4 4h2v1h-2zM10 4h2v1h-2zM5 5h6v1h-6zM1 9h10v1h-10z"/><path id="g33" d="M5 1h1v1h-1zM11 1h1v1h-1zM5 2h1v1h-1zM11 2h1v1h-1zM4 3h1v1h-1zM10 3h1v1h-1zM4 4h1v1h-1zM10 4h1v1h-1zM4 5h1v1h-1zM10 5h3v1h-3zM3 6h1v1h-1zM9 6h1v1h-1zM3 7h1v1h-1zM9 7h1v1h-1zM3 8h1v1h-1zM7 8h3v1h-3zM2 9h5v1h-5zM8 9h1v1h-1zM8 10h1v1h-1z"/><path id="g34" d="M5 1h8v1h-8zM5 2h1v1h-1zM4 3h1v1h-1zM4 4h8v1h-8zM3 5h10v1h-10zM4 7h6v1h-6zM3 8h1v1h-1zM10 8h1v1h-1zM2 9h1v1h-1zM9 9h1v1h-1zM3 10h6v1h-6z"/><path id="g35" d="M6 1h3v1h-3zM11 1h1v1h-1zM4 2h6v1h-6zM11 2h1v1h-1zM10 3h1v1h-1zM5 4h3v1h-3zM10 4h3v1h-3zM4 5h1v1h-1zM8 5h1v1h-1zM10 5h1v1h-1zM4 6h3v1h-3zM9 6h1v1h-1zM9 7h1v1h-1zM3 8h1v1h-1zM2 9h8v1h-8z"/><path id="g36" d="M5 0h4v1h-4zM10 0h1v1h-1zM12 0h1v1h-1zM5 1h1v1h-1zM10 1h1v1h-1zM12 1h1v1h-1zM5 2h1v1h-1zM10 2h1v1h-1zM12 2h1v1h-1zM4 3h1v1h-1zM9 3h1v1h-1zM11 3h1v1h-1zM4 4h6v1h-6zM11 4h1v1h-1zM4 5h1v1h-1zM9 5h1v1h-1zM11 5h1v1h-1zM3 6h1v1h-1zM8 6h1v1h-1zM10 6h1v1h-1zM3 7h1v1h-1zM8 7h1v1h-1zM10 7h1v1h-1zM3 8h4v1h-4zM8 8h1v1h-1zM10 8h1v1h-1zM7 9h1v1h-1zM9 9h1v1h-1z"/><path id="g37" d="M5 1h4v1h-4zM12 1h1v1h-1zM5 2h1v1h-1zM8 2h1v1h-1zM12 2h1v1h-1zM3 3h1v1h-1zM8 3h1v1h-1zM11 3h1v1h-1zM3 4h1v1h-1zM8 4h1v1h-1zM11 4h1v1h-1zM3 5h1v1h-1zM8 5h1v1h-1zM11 5h1v1h-1zM2 6h1v1h-1zM7 6h1v1h-1zM10 6h1v1h-1zM2 7h1v1h-1zM7 7h1v1h-1zM10 7h1v1h-1zM3 8h1v1h-1zM6 8h1v1h-1zM10 8h1v1h-1zM3 9h3v1h-3zM9 9h1v1h-1zM9 10h1v1h-1z"/><path id="g38" d="M5 1h1v1h-1zM12 1h1v1h-1zM5 2h8v1h-8zM4 3h1v1h-1zM11 3h1v1h-1zM4 4h8v1h-8zM3 5h10v1h-10zM3 7h8v1h-8zM3 8h8v1h-8zM2 9h8v1h-8z"/><path id="g39" d="M6 1h6v1h-6zM5 2h1v1h-1zM12 2h1v1h-1zM5 3h6v1h-6zM3 5h10v1h-10zM3 7h8v1h-8zM3 8h8v1h-8zM2 9h8v1h-8z"/><path id="g40" d="M5 1h4v1h-4zM12 1h1v1h-1zM5 2h1v1h-1zM8 2h1v1h-1zM12 2h1v1h-1zM3 3h1v1h-1zM8 3h4v1h-4zM3 4h1v1h-1zM8 4h1v1h-1zM11 4h1v1h-1zM3 5h1v1h-1zM8 5h1v1h-1zM11 5h1v1h-1zM2 6h1v1h-1zM7 6h4v1h-4zM2 7h1v1h-1zM7 7h1v1h-1zM10 7h1v1h-1zM3 8h1v1h-1zM6 8h1v1h-1zM10 8h1v1h-1zM3 9h3v1h-3zM9 9h1v1h-1zM9 10h1v1h-1z"/><path id="g41" d="M5 1h4v1h-4zM12 1h1v1h-1zM8 2h1v1h-1zM12 2h1v1h-1zM7 3h1v1h-1zM11 3h1v1h-1zM4 4h4v1h-4zM11 4h1v1h-1zM4 5h1v1h-1zM9 5h3v1h-3zM3 6h1v1h-1zM10 6h1v1h-1zM3 7h1v1h-1zM10 7h1v1h-1zM3 8h1v1h-1zM7 8h2v1h-2zM10 8h1v1h-1zM2 9h5v1h-5zM9 9h1v1h-1zM9 10h1v1h-1z"/><path id="g42" d="M5 1h1v1h-1zM9 1h1v1h-1zM12 1h1v1h-1zM5 2h1v1h-1zM9 2h1v1h-1zM12 2h1v1h-1zM4 3h5v1h-5zM11 3h1v1h-1zM4 4h1v1h-1zM8 4h4v1h-4zM4 5h1v1h-1zM8 5h1v1h-1zM11 5h1v1h-1zM3 6h5v1h-5zM10 6h1v1h-1zM3 7h1v1h-1zM10 7h1v1h-1zM3 8h1v1h-1zM2 9h8v1h-8z"/><path id="g43" d="M7 1h1v1h-1zM11 1h1v1h-1zM7 2h1v1h-1zM11 2h1v1h-1zM6 3h1v1h-1zM10 3h1v1h-1zM6 4h1v1h-1zM10 4h1v1h-1zM5 5h1v1h-1zM7 5h1v1h-1zM10 5h3v1h-3zM4 6h1v1h-1zM6 6h1v1h-1zM9 6h1v1h-1zM3 7h1v1h-1zM7 7h1v1h-1zM9 7h1v1h-1zM3 8h1v1h-1zM7 8h1v1h-1zM9 8h1v1h-1zM1 9h1v1h-1zM7 9h2v1h-2zM8 10h1v1h-1z"/><path id="g44" d="M6 1h6v1h-6zM5 2h1v1h-1zM12 2h1v1h-1zM5 3h6v1h-6zM6 4h1v1h-1zM9 4h1v1h-1zM3 5h10v1h-10zM4 7h6v1h-6zM3 8h1v1h-1zM10 8h1v1h-1zM2 9h1v1h-1zM9 9h1v1h-1zM3 10h6v1h-6z"/><path id="g45" d="M4 1h6v1h-6zM12 1h1v1h-1zM9 2h4v1h-4zM8 3h1v1h-1zM11 3h1v1h-1zM7 4h1v1h-1zM9 4h3v1h-3zM3 5h4v1h-4zM11 5h1v1h-1zM10 6h1v1h-1zM4 7h6v1h-6zM3 8h1v1h-1zM10 8h1v1h-1zM2 9h1v1h-1zM9 9h1v1h-1zM3 10h6v1h-6z"/><path id="g46" d="M6 1h6v1h-6zM5 2h1v1h-1zM12 2h1v1h-1zM4 3h1v1h-1zM11 3h1v1h-1zM5 4h6v1h-6zM2 6h10v1h-10zM7 7h1v1h-1zM7 8h1v1h-1zM6 9h1v1h-1zM6 10h1v1h-1z"/><path id="g47" d="M5 1h8v1h-8zM5 2h1v1h-1zM12 2h1v1h-1zM4 3h1v1h-1zM11 3h1v1h-1zM4 4h1v1h-1zM11 4h1v1h-1zM4 5h1v1h-1zM11 5h1v1h-1zM3 6h8v1h-8zM1 9h10v1h-10z"/><path id="g48" d="M5 1h8v1h-8zM12 2h1v1h-1zM4 3h8v1h-8zM4 4h1v1h-1zM4 5h1v1h-1zM3 6h8v1h-8zM7 7h1v1h-1zM7 8h1v1h-1zM1 9h10v1h-10z"/><path id="g49" d="M4 1h7v1h-7zM12 1h1v1h-1zM7 2h1v1h-1zM12 2h1v1h-1zM6 3h1v1h-1zM11 3h1v1h-1zM4 4h2v1h-2zM7 4h2v1h-2zM11 4h1v1h-1zM3 5h2v1h-2zM8 5h2v1h-2zM11 5h1v1h-1zM3 7h8v1h-8zM10 8h1v1h-1zM9 9h1v1h-1zM9 10h1v1h-1z"/><path id="g50" d="M4 1h7v1h-7zM12 1h1v1h-1zM7 2h1v1h-1zM12 2h1v1h-1zM6 3h1v1h-1zM11 3h1v1h-1zM5 4h1v1h-1zM7 4h1v1h-1zM9 4h3v1h-3zM4 5h2v1h-2zM8 5h1v1h-1zM11 5h1v1h-1zM2 6h1v1h-1zM8 6h1v1h-1zM10 6h1v1h-1zM3 7h1v1h-1zM10 7h1v1h-1zM3 8h1v1h-1zM2 9h8v1h-8z"/><path id="g51" d="M4 1h6v1h-6zM11 1h1v1h-1zM6 2h1v1h-1zM9 2h1v1h-1zM11 2h1v1h-1zM5 3h1v1h-1zM8 3h1v1h-1zM10 3h1v1h-1zM5 4h1v1h-1zM8 4h1v1h-1zM10 4h1v1h-1zM5 5h1v1h-1zM8 5h1v1h-1zM10 5h3v1h-3zM4 6h1v1h-1zM7 6h1v1h-1zM9 6h1v1h-1zM3 7h1v1h-1zM6 7h1v1h-1zM9 7h1v1h-1zM2 8h1v1h-1zM6 8h1v1h-1zM9 8h1v1h-1zM4 9h1v1h-1zM8 9h1v1h-1zM8 10h1v1h-1z"/><path id="g52" d="M5 1h7v1h-7zM6 2h1v1h-1zM9 2h1v1h-1zM11 2h1v1h-1zM5 3h1v1h-1zM8 3h1v1h-1zM10 3h1v1h-1zM5 4h1v1h-1zM8 4h1v1h-1zM10 4h1v1h-1zM5 5h1v1h-1zM8 5h1v1h-1zM10 5h3v1h-3zM4 6h1v1h-1zM7 6h1v1h-1zM9 6h1v1h-1zM3 7h1v1h-1zM5 7h2v1h-2zM8 7h2v1h-2zM3 8h1v1h-1zM5 8h2v1h-2zM8 8h2v1h-2zM1 9h1v1h-1zM4 9h1v1h-1zM8 9h1v1h-1zM8 10h1v1h-1z"/><path id="g53" d="M5 1h8v1h-8zM5 2h8v1h-8zM4 3h1v1h-1zM4 4h8v1h-8zM3 5h10v1h-10zM3 7h8v1h-8zM3 8h8v1h-8zM2 9h8v1h-8z"/><path id="g54" d="M5 1h8v1h-8zM5 2h1v1h-1zM12 2h1v1h-1zM4 3h1v1h-1zM11 3h1v1h-1zM4 4h1v1h-1zM11 4h1v1h-1zM4 5h1v1h-1zM11 5h1v1h-1zM3 6h8v1h-8zM7 7h1v1h-1zM7 8h1v1h-1zM1 9h10v1h-10z"/><path id="g55" d="M5 1h8v1h-8zM5 2h1v1h-1zM4 3h1v1h-1zM4 4h1v1h-1zM4 5h8v1h-8zM2 6h10v1h-10zM7 7h1v1h-1zM7 8h1v1h-1zM6 9h1v1h-1zM6 10h1v1h-1z"/><path id="g56" d="M5 1h4v1h-4zM12 1h1v1h-1zM5 2h1v1h-1zM12 2h1v1h-1zM4 3h1v1h-1zM11 3h1v1h-1zM4 4h1v1h-1zM11 4h1v1h-1zM4 5h1v1h-1zM8 5h4v1h-4zM3 6h1v1h-1zM10 6h1v1h-1zM3 7h1v1h-1zM10 7h1v1h-1zM3 8h1v1h-1zM7 8h1v1h-1zM10 8h1v1h-1zM2 9h4v1h-4zM9 9h1v1h-1zM9 10h1v1h-1z"/><path id="g57" d="M5 1h5v1h-5zM11 1h1v1h-1zM5 2h1v1h-1zM11 2h1v1h-1zM4 3h1v1h-1zM10 3h1v1h-1zM4 4h1v1h-1zM10 4h1v1h-1zM4 5h1v1h-1zM10 5h3v1h-3zM3 6h1v1h-1zM9 6h1v1h-1zM3 7h1v1h-1zM9 7h1v1h-1zM3 8h1v1h-1zM8 8h2v1h-2zM2 9h5v1h-5zM8 9h1v1h-1zM8 10h1v1h-1z"/><path id="g58" d="M5 1h8v1h-8zM5 2h1v1h-1zM12 2h1v1h-1zM4 3h1v1h-1zM11 3h1v1h-1zM4 4h1v1h-1zM11 4h1v1h-1zM4 5h8v1h-8zM2 6h10v1h-10zM7 7h1v1h-1zM7 8h1v1h-1zM6 9h1v1h-1zM6 10h1v1h-1z"/><path id="g59" d="M5 1h4v1h-4zM12 1h1v1h-1zM4 2h1v1h-1zM9 2h1v1h-1zM12 2h1v1h-1zM3 3h1v1h-1zM8 3h4v1h-4zM3 4h1v1h-1zM8 4h1v1h-1zM11 4h1v1h-1zM4 5h4v1h-4zM11 5h1v1h-1zM10 6h1v1h-1zM7 7h1v1h-1zM7 8h1v1h-1zM4 9h4v1h-4zM2 10h2v1h-2zM8 10h2v1h-2z"/><path id="g60" d="M7 1h4v1h-4zM5 2h8v1h-8zM7 3h2v1h-2zM4 4h3v1h-3zM9 4h3v1h-3zM3 5h10v1h-10zM7 6h1v1h-1zM3 7h8v1h-8zM3 8h8v1h-8zM2 9h8v1h-8z"/><path id="g61" d="M5 1h8v1h-8zM5 2h8v1h-8zM4 3h1v1h-1zM4 4h8v1h-8zM3 5h10v1h-10zM3 7h8v1h-8zM3 8h1v1h-1zM10 8h1v1h-1zM2 9h8v1h-8z"/><path id="g62" d="M5 1h4v1h-4zM11 1h1v1h-1zM5 2h1v1h-1zM8 2h1v1h-1zM11 2h1v1h-1zM3 3h1v1h-1zM8 3h1v1h-1zM10 3h1v1h-1zM3 4h1v1h-1zM8 4h1v1h-1zM10 4h1v1h-1zM3 5h1v1h-1zM8 5h1v1h-1zM10 5h3v1h-3zM2 6h1v1h-1zM7 6h1v1h-1zM9 6h1v1h-1zM2 7h1v1h-1zM7 7h1v1h-1zM9 7h1v1h-1zM3 8h1v1h-1zM6 8h1v1h-1zM9 8h1v1h-1zM3 9h3v1h-3zM8 9h1v1h-1zM8 10h1v1h-1z"/><path id="g63" d="M5 1h1v1h-1zM12 1h1v1h-1zM5 2h1v1h-1zM12 2h1v1h-1zM4 3h1v1h-1zM11 3h1v1h-1zM4 4h1v1h-1zM11 4h1v1h-1zM4 5h6v1h-6zM11 5h1v1h-1zM3 7h8v1h-8zM3 8h8v1h-8zM2 9h8v1h-8z"/><path id="g64" d="M9 1h1v1h-1zM8 2h3v1h-3zM4 3h3v1h-3zM10 3h2v1h-2zM3 5h10v1h-10zM7 6h1v1h-1zM7 8h1v1h-1zM5 9h3v1h-3zM2 10h3v1h-3zM7 10h3v1h-3z"/><path id="g65" d="M4 1h8v1h-8zM7 2h1v1h-1zM11 2h1v1h-1zM6 3h1v1h-1zM10 3h1v1h-1zM6 4h1v1h-1zM10 4h1v1h-1zM6 5h1v1h-1zM10 5h3v1h-3zM4 6h2v1h-2zM9 6h1v1h-1zM4 7h1v1h-1zM6 7h1v1h-1zM9 7h1v1h-1zM3 8h1v1h-1zM7 8h1v1h-1zM9 8h1v1h-1zM1 9h1v1h-1zM7 9h2v1h-2zM8 10h1v1h-1z"/><path id="g66" d="M5 1h8v1h-8zM12 2h1v1h-1zM4 3h8v1h-8zM11 4h1v1h-1zM3 5h10v1h-10zM3 7h8v1h-8zM3 8h1v1h-1zM10 8h1v1h-1zM2 9h8v1h-8z"/><path id="g67" d="M5 1h8v1h-8zM12 2h1v1h-1zM7 3h1v1h-1zM11 3h1v1h-1zM7 4h1v1h-1zM11 4h1v1h-1zM3 5h10v1h-10zM4 7h6v1h-6zM3 8h1v1h-1zM10 8h1v1h-1zM2 9h1v1h-1zM9 9h1v1h-1zM3 10h6v1h-6z"/><path id="g68" d="M5 1h1v1h-1zM8 1h1v1h-1zM10 1h1v1h-1zM12 1h1v1h-1zM5 2h1v1h-1zM8 2h1v1h-1zM10 2h1v1h-1zM12 2h1v1h-1zM4 3h4v1h-4zM9 3h1v1h-1zM11 3h1v1h-1zM4 4h1v1h-1zM7 4h1v1h-1zM9 4h3v1h-3zM4 5h4v1h-4zM9 5h1v1h-1zM11 5h1v1h-1zM8 6h1v1h-1zM10 6h1v1h-1zM3 7h8v1h-8zM10 8h1v1h-1zM9 9h1v1h-1zM9 10h1v1h-1z"/><path id="g69" d="M7 1h4v1h-4zM5 2h8v1h-8zM8 3h1v1h-1zM7 4h1v1h-1zM9 4h1v1h-1zM4 5h3v1h-3zM10 5h2v1h-2zM2 7h10v1h-10zM7 8h1v1h-1zM6 9h1v1h-1zM6 10h1v1h-1z"/><path id="g70" d="M5 1h5v1h-5zM12 1h1v1h-1zM9 2h1v1h-1zM12 2h1v1h-1zM8 3h1v1h-1zM11 3h1v1h-1zM4 4h5v1h-5zM11 4h1v1h-1zM4 5h1v1h-1zM11 5h1v1h-1zM3 6h1v1h-1zM10 6h1v1h-1zM3 7h1v1h-1zM10 7h1v1h-1zM3 8h1v1h-1zM8 8h1v1h-1zM10 8h1v1h-1zM2 9h5v1h-5zM9 9h1v1h-1zM9 10h1v1h-1z"/><path id="g71" d="M5 1h5v1h-5zM11 1h1v1h-1zM5 2h1v1h-1zM9 2h1v1h-1zM11 2h1v1h-1zM4 3h1v1h-1zM8 3h1v1h-1zM10 3h1v1h-1zM4 4h1v1h-1zM8 4h1v1h-1zM10 4h3v1h-3zM4 5h5v1h-5zM10 5h1v1h-1zM3 7h8v1h-8zM7 8h1v1h-1zM5 9h1v1h-1zM7 9h1v1h-1zM2 10h3v1h-3zM8 10h2v1h-2z"/><path id="g72" d="M4 1h5v1h-5zM12 1h1v1h-1zM9 2h1v1h-1zM12 2h1v1h-1zM8 3h1v1h-1zM11 3h1v1h-1zM8 4h1v1h-1zM11 4h1v1h-1zM8 5h1v1h-1zM11 5h1v1h-1zM6 6h2v1h-2zM10 6h1v1h-1zM6 7h1v1h-1zM10 7h1v1h-1zM4 8h2v1h-2zM10 8h1v1h-1zM1 9h3v1h-3zM9 9h1v1h-1zM9 10h1v1h-1z"/><path id="g73" d="M6 1h4v1h-4zM12 1h1v1h-1zM5 2h1v1h-1zM10 2h1v1h-1zM12 2h1v1h-1zM4 3h1v1h-1zM9 3h1v1h-1zM11 3h1v1h-1zM5 4h4v1h-4zM11 4h1v1h-1zM8 5h4v1h-4zM2 6h5v1h-5zM10 6h1v1h-1zM5 7h1v1h-1zM10 7h1v1h-1zM5 8h1v1h-1zM10 8h1v1h-1zM4 9h1v1h-1zM9 9h1v1h-1zM9 10h1v1h-1z"/><path id="g74" d="M6 1h3v1h-3zM11 1h1v1h-1zM4 2h6v1h-6zM11 2h1v1h-1zM10 3h1v1h-1zM5 4h3v1h-3zM10 4h1v1h-1zM4 5h1v1h-1zM8 5h1v1h-1zM10 5h3v1h-3zM3 6h1v1h-1zM7 6h1v1h-1zM9 6h1v1h-1zM3 7h1v1h-1zM7 7h1v1h-1zM9 7h1v1h-1zM3 8h1v1h-1zM7 8h1v1h-1zM9 8h1v1h-1zM3 9h3v1h-3zM8 9h1v1h-1zM8 10h1v1h-1z"/><path id="g75" d="M5 0h3v1h-3zM10 0h1v1h-1zM12 0h1v1h-1zM5 1h1v1h-1zM7 1h1v1h-1zM10 1h1v1h-1zM12 1h1v1h-1zM4 2h1v1h-1zM8 2h1v1h-1zM10 2h1v1h-1zM12 2h1v1h-1zM3 3h1v1h-1zM7 3h1v1h-1zM9 3h1v1h-1zM11 3h1v1h-1zM3 4h1v1h-1zM7 4h3v1h-3zM11 4h1v1h-1zM3 5h1v1h-1zM7 5h1v1h-1zM9 5h1v1h-1zM11 5h1v1h-1zM2 6h1v1h-1zM6 6h1v1h-1zM8 6h1v1h-1zM10 6h1v1h-1zM3 7h1v1h-1zM5 7h1v1h-1zM8 7h1v1h-1zM10 7h1v1h-1zM3 8h3v1h-3zM8 8h1v1h-1zM10 8h1v1h-1zM7 9h1v1h-1zM9 9h1v1h-1z"/><path id="g76" d="M5 1h1v1h-1zM12 1h1v1h-1zM5 2h1v1h-1zM12 2h1v1h-1zM4 3h1v1h-1zM8 3h4v1h-4zM4 4h1v1h-1zM11 4h1v1h-1zM4 5h6v1h-6zM11 5h1v1h-1zM5 6h4v1h-4zM3 7h8v1h-8zM4 8h6v1h-6zM2 9h1v1h-1zM9 9h1v1h-1zM3 10h6v1h-6z"/><path id="g77" d="M6 1h3v1h-3zM11 1h1v1h-1zM4 2h6v1h-6zM11 2h1v1h-1zM5 3h3v1h-3zM10 3h1v1h-1zM4 4h1v1h-1zM8 4h1v1h-1zM10 4h3v1h-3zM4 5h1v1h-1zM8 5h1v1h-1zM10 5h1v1h-1zM4 6h3v1h-3zM3 7h7v1h-7zM3 8h1v1h-1zM9 8h1v1h-1zM2 9h7v1h-7z"/></defs><g fill="rgb(0,116,0)"><use href="#g0" x="416" y="81"/><use href="#g1" x="435" y="81"/><use href="#g2" x="447" y="81"/><use href="#g3" x="466" y="81"/><use href="#g4" x="478" y="81"/><use href="#g5" x="490" y="81"/><use href="#g6" x="508" y="81"/><use href="#g7" x="520" y="81"/><use href="#g0" x="423" y="95"/><use href="#g8" x="442" y="95"/><use href="#g9" x="454" y="95"/><use href="#g10" x="472" y="95"/><use href="#g11" x="667" y="109"/><use href="#g12" x="679" y="109"/><use href="#g8" x="698" y="109"/><use href="#g5" x="710" y="109"/><use href="#g13" x="728" y="109"/><use href="#g10" x="740" y="109"/><use href="#g14" x="759" y="109"/><use href="#g15" x="771" y="109"/><use href="#g16" x="783" y="109"/><use href="#g17" x="802" y="109"/><use href="#g5" x="814" y="109"/><use href="#g18" x="832" y="109"/><use href="#g19" x="403" y="123"/><use href="#g20" x="415" y="123"/><use href="#g6" x="434" y="123"/><use href="#g7" x="446" y="123"/><use href="#g21" x="746" y="137"/><use href="#g2" x="758" y="137"/><use href="#g5" x="770" y="137"/><use href="#g18" x="789" y="137"/><use href="#g10" x="509" y="151"/><use href="#g22" x="534" y="151"/><use href="#g5" x="546" y="151"/><use href="#g23" x="565" y="151"/><use href="#g22" x="577" y="151"/><use href="#g24" x="377" y="207"/><use href="#g8" x="389" y="207"/><use href="#g25" x="401" y="207"/><use href="#g21" x="419" y="207"/><use href="#g2" x="431" y="207"/><use href="#g26" x="443" y="207"/><use href="#g15" x="455" y="207"/><use href="#g27" x="474" y="207"/><use href="#g26" x="486" y="207"/><use href="#g28" x="416" y="375"/><use href="#g29" x="428" y="375"/><use href="#g23" x="440" y="375"/><use href="#g30" x="452" y="375"/><use href="#g18" x="471" y="375"/><use href="#g7" x="483" y="375"/><use href="#g31" x="502" y="375"/><use href="#g32" x="514" y="375"/><use href="#g33" x="526" y="375"/><use href="#g34" x="544" y="375"/><use href="#g22" x="556" y="375"/><use href="#g35" x="568" y="375"/><use href="#g36" x="587" y="375"/><use href="#g37" x="599" y="375"/><use href="#g38" x="611" y="375"/><use href="#g39" x="623" y="375"/><use href="#g40" x="641" y="375"/><use href="#g41" x="653" y="375"/><use href="#g42" x="665" y="375"/><use href="#g43" x="684" y="375"/><use href="#g44" x="696" y="375"/><use href="#g30" x="708" y="375"/><use href="#g45" x="727" y="375"/><use href="#g46" x="739" y="375"/><use href="#g7" x="751" y="375"/><use href="#g31" x="769" y="375"/><use href="#g32" x="781" y="375"/><use href="#g47" x="793" y="375"/><use href="#g48" x="805" y="375"/><use href="#g8" x="581" y="431"/><use href="#g9" x="593" y="431"/><use href="#g10" x="612" y="431"/><use href="#g49" x="631" y="431"/><use href="#g50" x="643" y="431"/><use href="#g51" x="655" y="431"/><use href="#g15" x="667" y="431"/><use href="#g5" x="679" y="431"/><use href="#g17" x="697" y="431"/><use href="#g52" x="709" y="431"/><use href="#g53" x="721" y="431"/><use href="#g54" x="740" y="431"/><use href="#g55" x="752" y="431"/><use href="#g56" x="770" y="431"/><use href="#g35" x="782" y="431"/><use href="#g57" x="794" y="431"/><use href="#g8" x="654" y="445"/><use href="#g9" x="666" y="445"/><use href="#g10" x="685" y="445"/><use href="#g5" x="697" y="445"/><use href="#g22" x="722" y="445"/><use href="#g5" x="734" y="445"/><use href="#g23" x="752" y="445"/><use href="#g22" x="764" y="445"/><use href="#g37" x="776" y="445"/><use href="#g58" x="795" y="445"/><use href="#g59" x="807" y="445"/><use href="#g26" x="819" y="445"/><use href="#g15" x="831" y="445"/><use href="#g27" x="850" y="445"/><use href="#g26" x="862" y="445"/><use href="#g35" x="874" y="445"/><use href="#g57" x="886" y="445"/><use href="#g6" x="588" y="473"/><use href="#g7" x="600" y="473"/><use href="#g10" x="625" y="473"/><use href="#g39" x="637" y="473"/><use href="#g60" x="656" y="473"/><use href="#g4" x="668" y="473"/><use href="#g35" x="680" y="473"/><use href="#g57" x="692" y="473"/><use href="#g23" x="621" y="487"/><use href="#g22" x="633" y="487"/><use href="#g5" x="645" y="487"/><use href="#g37" x="664" y="487"/><use href="#g61" x="676" y="487"/><use href="#g39" x="688" y="487"/><use href="#g60" x="706" y="487"/><use href="#g4" x="718" y="487"/><use href="#g35" x="730" y="487"/><use href="#g57" x="742" y="487"/><use href="#g22" x="410" y="543"/><use href="#g37" x="422" y="543"/><use href="#g22" x="440" y="543"/><use href="#g23" x="452" y="543"/><use href="#g22" x="464" y="543"/><use href="#g37" x="476" y="543"/><use href="#g62" x="495" y="543"/><use href="#g63" x="507" y="543"/><use href="#g45" x="526" y="543"/><use href="#g46" x="538" y="543"/><use href="#g8" x="556" y="543"/><use href="#g9" x="568" y="543"/><use href="#g64" x="587" y="543"/><use href="#g65" x="599" y="543"/><use href="#g1" x="617" y="543"/><use href="#g66" x="629" y="543"/><use href="#g5" x="641" y="543"/><use href="#g67" x="660" y="543"/><use href="#g68" x="672" y="543"/><use href="#g39" x="684" y="543"/><use href="#g69" x="703" y="543"/><use href="#g25" x="715" y="543"/><use href="#g35" x="727" y="543"/><use href="#g57" x="739" y="543"/><use href="#g8" x="522" y="655"/><use href="#g9" x="534" y="655"/><use href="#g10" x="553" y="655"/><use href="#g5" x="565" y="655"/><use href="#g64" x="583" y="655"/><use href="#g65" x="595" y="655"/><use href="#g1" x="614" y="655"/><use href="#g66" x="626" y="655"/><use href="#g5" x="638" y="655"/><use href="#g17" x="656" y="655"/><use href="#g52" x="668" y="655"/><use href="#g53" x="680" y="655"/><use href="#g60" x="699" y="655"/><use href="#g4" x="711" y="655"/><use href="#g35" x="723" y="655"/><use href="#g57" x="735" y="655"/><use href="#g64" x="278" y="753"/><use href="#g65" x="290" y="753"/><use href="#g5" x="302" y="753"/><use href="#g65" x="320" y="753"/><use href="#g70" x="332" y="753"/><use href="#g18" x="344" y="753"/><use href="#g53" x="356" y="753"/><use href="#g71" x="375" y="753"/><use href="#g69" x="387" y="753"/><use href="#g72" x="399" y="753"/><use href="#g73" x="418" y="753"/><use href="#g74" x="430" y="753"/><use href="#g40" x="442" y="753"/><use href="#g65" x="467" y="753"/><use href="#g70" x="479" y="753"/><use href="#g18" x="491" y="753"/><use href="#g64" x="509" y="753"/><use href="#g65" x="521" y="753"/><use href="#g5" x="533" y="753"/><use href="#g19" x="552" y="753"/><use href="#g75" x="564" y="753"/><use href="#g67" x="583" y="753"/><use href="#g68" x="595" y="753"/><use href="#g39" x="607" y="753"/><use href="#g76" x="625" y="753"/><use href="#g0" x="637" y="753"/><use href="#g77" x="656" y="753"/><use href="#g18" x="668" y="753"/></g></svg>
<div class="abs" style="left:3px;top:0;width:1px;height:926px;background:#3392f5"></div>
<div class="abs" style="left:1061px;top:0;width:1px;height:926px;background:#3392f5"></div>
<div class="abs" style="left:3px;top:925px;width:1059px;height:1px;background:#3392f5"></div>
</div></body></html>
